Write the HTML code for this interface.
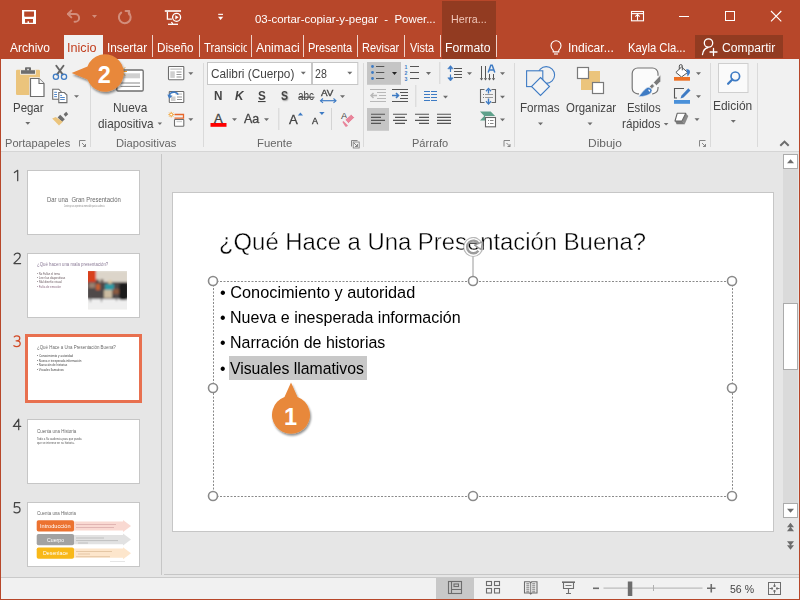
<!DOCTYPE html>
<html><head><meta charset="utf-8"><style>
html,body{margin:0;padding:0;}
body{width:800px;height:600px;overflow:hidden;position:relative;background:#e6e6e6;font-family:"Liberation Sans",sans-serif;}
.a{position:absolute;}
.t{position:absolute;white-space:pre;transform-origin:0 0;font-family:"Liberation Sans",sans-serif;}
svg{position:absolute;overflow:visible;}
</style></head><body>
<!-- red top -->
<div class="a" style="left:0;top:0;width:800px;height:59px;background:#b7472a"></div>
<div class="a" style="left:442px;top:1px;width:54px;height:58px;background:#923b21"></div>
<div class="a" style="left:695px;top:35px;width:88px;height:23px;background:#923b21"></div>
<div class="a" style="left:64px;top:35px;width:39px;height:24px;background:#f1f1f1"></div>
<!-- tab separators -->
<div class="a" style="left:152px;top:35px;width:1px;height:22px;background:#efd2ca"></div>
<div class="a" style="left:199px;top:35px;width:1px;height:22px;background:#efd2ca"></div>
<div class="a" style="left:251px;top:35px;width:1px;height:22px;background:#efd2ca"></div>
<div class="a" style="left:303px;top:35px;width:1px;height:22px;background:#efd2ca"></div>
<div class="a" style="left:357px;top:35px;width:1px;height:22px;background:#efd2ca"></div>
<div class="a" style="left:404px;top:35px;width:1px;height:22px;background:#efd2ca"></div>
<div class="a" style="left:440px;top:35px;width:1px;height:22px;background:#efd2ca"></div>
<div class="a" style="left:496px;top:35px;width:1px;height:22px;background:#efd2ca"></div>
<!-- ribbon -->
<div class="a" style="left:0;top:59px;width:800px;height:92px;background:#f1f1f1"></div>
<div class="a" style="left:0;top:151px;width:800px;height:1px;background:#d5d5d5"></div>
<!-- group separators -->
<div class="a" style="left:90px;top:63px;width:1px;height:84px;background:#dadada"></div>
<div class="a" style="left:203px;top:63px;width:1px;height:84px;background:#dadada"></div>
<div class="a" style="left:363px;top:63px;width:1px;height:84px;background:#dadada"></div>
<div class="a" style="left:514px;top:63px;width:1px;height:84px;background:#dadada"></div>
<div class="a" style="left:710px;top:63px;width:1px;height:84px;background:#dadada"></div>
<div class="a" style="left:757px;top:63px;width:1px;height:84px;background:#dadada"></div>
<!-- workspace -->
<div class="a" style="left:161px;top:154px;width:1px;height:421px;background:#c6c6c6"></div>
<div class="a" style="left:164px;top:574px;width:635px;height:1px;background:#c6c6c6"></div>
<!-- slide -->
<div class="a" style="left:172px;top:192px;width:600px;height:338px;background:#fff;border:1px solid #c6c6c6"></div>
<!-- scrollbar -->
<div class="a" style="left:783px;top:154px;width:15px;height:363px;background:#dadada"></div>
<div class="a" style="left:783px;top:154px;width:13px;height:13px;background:#fff;border:1px solid #ababab"></div>
<div class="a" style="left:783px;top:303px;width:13px;height:65px;background:#fff;border:1px solid #ababab"></div>
<div class="a" style="left:783px;top:503px;width:13px;height:13px;background:#fff;border:1px solid #ababab"></div>
<!-- status bar -->
<div class="a" style="left:0;top:577px;width:800px;height:23px;background:#f1f1f1"></div>
<div class="a" style="left:0;top:577px;width:800px;height:1px;background:#cacaca"></div>
<div class="a" style="left:436px;top:578px;width:38px;height:21px;background:#c8c8c8"></div>
<!-- thumbnails -->
<div class="a" style="left:27px;top:170px;width:111px;height:63px;background:#fff;border:1px solid #c6c6c6"></div>
<div class="a" style="left:27px;top:253px;width:111px;height:63px;background:#fff;border:1px solid #c6c6c6"></div>
<div class="a" style="left:25px;top:334px;width:111px;height:63px;background:#fff;border:3px solid #e8704f"></div>
<div class="a" style="left:27px;top:419px;width:111px;height:63px;background:#fff;border:1px solid #c6c6c6"></div>
<div class="a" style="left:27px;top:502px;width:111px;height:63px;background:#fff;border:1px solid #c6c6c6"></div>
<!-- highlight -->
<div class="a" style="left:229px;top:356px;width:138px;height:24px;background:#c8c8c8"></div>
<!-- window borders -->
<div class="a" style="left:0;top:0;width:1px;height:600px;background:#b7472a"></div>
<div class="a" style="left:799px;top:0;width:1px;height:600px;background:#b7472a"></div>
<div class="a" style="left:0;top:599px;width:800px;height:1px;background:#b7472a"></div>
<!-- thumb 2 image -->
<svg width="800" height="600" style="left:0;top:0" viewBox="0 0 800 600">
<defs><filter id="bl" x="-10%" y="-10%" width="120%" height="120%"><feGaussianBlur stdDeviation="0.9"/></filter>
<clipPath id="pc"><rect x="88" y="271" width="39" height="38.5"/></clipPath></defs>
<g clip-path="url(#pc)">
<rect x="88" y="271" width="39" height="38.5" fill="#ece9e4"/>
<g filter="url(#bl)">
<rect x="88" y="271" width="40" height="14" fill="#dcd5ca"/>
<rect x="86" y="270" width="10" height="13.5" fill="#d8401a"/>
<rect x="87" y="282" width="42" height="17" fill="#4f4a48"/>
<rect x="87" y="299" width="42" height="11" fill="#efefef"/>
<rect x="89" y="283" width="6" height="5" fill="#9a8070"/>
<rect x="96" y="284" width="4" height="6" fill="#c8602e"/>
<circle cx="97.5" cy="281" r="1.8" fill="#5a4a40"/>
<circle cx="102" cy="280.5" r="1.6" fill="#6a5a50"/>
<rect x="105" y="284" width="9" height="6" fill="#2f9aa4"/>
<circle cx="110" cy="282" r="2" fill="#e0c8a0"/>
<rect x="104" y="290" width="8" height="8" fill="#cbbba0"/>
<rect x="113" y="289" width="7" height="5" fill="#8a5a40"/>
<rect x="119" y="283" width="9" height="17" rx="3" fill="#1a1a1a"/>
<rect x="90" y="296" width="1" height="6" fill="#555"/>
<rect x="101" y="296" width="1" height="6" fill="#555"/>
<rect x="116" y="296" width="1" height="5" fill="#555"/>
</g>
</g>
</svg>
<!-- thumb 5 arrows -->
<svg width="800" height="600" style="left:0;top:0" viewBox="0 0 800 600">
<path d="M73 521.4h50v-1.4l8 6l-8 6v-1.4h-50z" fill="#f9d9d2"/>
<path d="M73 535h50v-1.4l8 6l-8 6v-1.4h-50z" fill="#e2e2e2"/>
<path d="M73 548.6h50v-1.4l8 6l-8 6v-1.4h-50z" fill="#fde6cc"/>
<rect x="36.7" y="520.2" width="37.3" height="11.4" rx="1.8" fill="#ec7230"/>
<rect x="36.7" y="533.9" width="37.3" height="11.4" rx="1.8" fill="#a2a2a2"/>
<rect x="36.7" y="547.4" width="37.3" height="11.3" rx="1.8" fill="#f8b818"/>
<g stroke-width="0.75">
<path d="M76 524.5h40M76 527.5h38" stroke="#d8a8a8"/>
<path d="M76 538h28M76 540.6h42M78 543h10" stroke="#b4b4b4"/>
<path d="M76 551.5h36M78 554h12M76 556.7h34" stroke="#dcbc98"/>
<path d="M110 561.5h15" stroke="#dcdcdc"/>
</g>
</svg>

<svg width="800" height="600" style="left:0;top:0" viewBox="0 0 800 600">
<!-- ===== title bar ===== -->
<!-- save -->
<rect x="22" y="10" width="14" height="14" fill="#fff"/>
<path d="M24.2 11.4h9.8v4.6q0 0.8-0.8 0.8h-8.2q-0.8 0-0.8-0.8z" fill="#b7472a"/>
<path d="M25 19.1h8v3.6h-4v-1.5h-1.5v1.5h-2.5z" fill="#b7472a"/>
<!-- undo (faded) -->
<g opacity="0.38" stroke="#fff" stroke-width="2" fill="none" stroke-linecap="round" stroke-linejoin="round">
<path d="M68 14h7.2a3.9 3.9 0 0 1 0 7.8h-0.6"/>
<path d="M71.3 10.6L67.9 14L71.3 17.4"/>
<path d="M128.6 12.8A5.9 5.9 0 1 1 121.2 12.6"/>
<path d="M125.6 10.9h3.6v3.7"/>
</g>
<path d="M92 15h5l-2.5 3z" fill="#fff" fill-opacity="0.38"/>
<!-- present from start -->
<g stroke="#fff" stroke-width="1.3" fill="none">
<path d="M164.8 11h16.2" stroke-width="1.6"/>
<path d="M167.4 11.7v7.4h4.5"/>
<circle cx="176.6" cy="17.3" r="4"/>
<path d="M168 24.3h10"/>
<path d="M171.5 22l1.2 2"/>
</g>
<path d="M175.3 15.2v4.2l3.3-2.1z" fill="#fff"/>
<!-- customize -->
<rect x="218.2" y="13.8" width="4.8" height="1.1" fill="#fff"/>
<path d="M218 16.8h5.2l-2.6 3.2z" fill="#fff"/>
<!-- ribbon display options -->
<g stroke="#fff" stroke-width="1.1" fill="none">
<rect x="631.5" y="11.5" width="12" height="9.3"/>
<path d="M631.5 13.6h12"/>
<path d="M637.5 20.5v-6"/>
<path d="M635.3 16.7l2.2-2.2l2.2 2.2"/>
</g>
<!-- minimize / maximize / close -->
<rect x="679" y="16" width="10" height="1" fill="#fff"/>
<rect x="725.5" y="11.5" width="9" height="9" stroke="#fff" stroke-width="1" fill="none"/>
<path d="M771 11l10.3 10.3M781.3 11L771 21.3" stroke="#fff" stroke-width="1.1"/>
<!-- ===== tab row ===== -->
<!-- bulb -->
<g stroke="#fff" stroke-width="1.1" fill="none">
<path d="M553.2 50.3c-1.2-1.3-2.2-2.7-2.2-4.6a5 5 0 0 1 10 0c0 1.9-1 3.3-2.2 4.6v1.6h-5.6z"/>
<path d="M554 54h4"/>
</g>
<!-- share person -->
<g stroke="#fff" stroke-width="1.3" fill="none" stroke-linecap="round">
<circle cx="708.5" cy="43" r="4.2"/>
<path d="M702.5 54.5c0.5-3.8 2.8-6.3 5.5-7"/>
<path d="M713.5 48.5v7M710 52h7"/>
</g>
</svg>
<svg width="800" height="600" style="left:0;top:0" viewBox="0 0 800 600">
<!-- ===== Portapapeles ===== -->
<!-- paste -->
<rect x="16" y="69.7" width="24" height="25.3" rx="1.3" fill="#ebc47c"/>
<rect x="20.2" y="69.5" width="15.6" height="5.2" fill="#f1f1f1"/>
<rect x="21" y="70.2" width="14" height="3.6" fill="#6d6d6d"/>
<rect x="25" y="67.3" width="6" height="3.5" rx="0.8" fill="#6d6d6d"/>
<rect x="27.3" y="68.8" width="1.5" height="1.4" fill="#f1f1f1"/>
<path d="M29.3 77.3h10.2l5.3 5.3v14.8h-15.5z" fill="#f1f1f1"/>
<path d="M30.5 78.5h8.5l5 5v13h-13.5z" fill="#fff" stroke="#6d6d6d" stroke-width="1.2"/>
<path d="M39 78.5v5h5" fill="#f4f4f4" stroke="#6d6d6d" stroke-width="1.1"/>
<!-- scissors -->
<path d="M56.3 65.8L62.8 74.6M63.5 65.8L57 74.6" stroke="#666" stroke-width="1.9" stroke-linecap="round"/>
<g stroke="#3e7bc4" stroke-width="1.3" fill="none">
<circle cx="55.9" cy="76.8" r="2.6"/>
<circle cx="64" cy="76.8" r="2.6"/>
</g>
<!-- copy -->
<g stroke="#6d6d6d" stroke-width="1.1" fill="#fff">
<path d="M52.7 89.2h6l2.5 2.5v7.5h-8.5z"/>
<path d="M58.8 92.5h5.5l2.6 2.6v7.5h-8.1z"/>
</g>
<g stroke="#3e7bc4" stroke-width="0.9">
<path d="M54.2 92.3h2.8M54.2 94.5h2.8M54.2 96.6h2.8"/>
<path d="M60.2 95.4h1.8M60.2 97.5h4.6M60.2 99.5h4.6"/>
</g>
<path d="M74 95.2h5l-2.5 2.6z" fill="#6d6d6d"/>
<!-- format painter -->
<path d="M63.6 114.2l2.7-2.4l1.9 2.4l-2.7 2.5z" fill="#6d6d6d"/>
<path d="M60.2 114.8l4.6 4.4l-2.7 2.7l-4.5-4.4z" fill="#6d6d6d"/>
<path d="M52.2 118.4l3.5-1.4l7.1 4.7l-3.8 3.9z" fill="#ebc47c"/>
<!-- ===== Diapositivas ===== -->
<rect x="116.8" y="70" width="26.4" height="21" rx="1.2" fill="#fff" stroke="#6d6d6d" stroke-width="1.3"/>
<rect x="120.5" y="73.3" width="19.5" height="5" fill="#d0d0d0"/>
<path d="M120.5 83h19.5M120.5 86.4h19.5" stroke="#7a7a7a" stroke-width="0.9"/>
<g stroke="#f0a030" stroke-width="1"><path d="M121 65.5v12M115 71.5h12M116.8 67.3l8.4 8.4M125.2 67.3l-8.4 8.4"/></g>
<!-- layout -->
<rect x="168.5" y="66.5" width="15.3" height="13.2" rx="0.6" fill="#fff" stroke="#6d6d6d" stroke-width="1.1"/>
<rect x="170.3" y="68.3" width="11.7" height="1.6" fill="#cfcfcf"/>
<rect x="170.3" y="71.3" width="4.5" height="6.6" fill="#cfcfcf"/>
<path d="M176.5 72h5M176.5 74.5h5M176.5 77h5" stroke="#7a7a7a" stroke-width="0.8"/>
<path d="M188.3 72.3h5l-2.5 2.7z" fill="#6d6d6d"/>
<!-- reset -->
<rect x="169.3" y="91.5" width="14.5" height="11" rx="0.6" fill="#fff" stroke="#6d6d6d" stroke-width="1.1"/>
<rect x="171" y="96.5" width="4.5" height="4.5" fill="#cfcfcf"/>
<rect x="175.5" y="93.3" width="6.5" height="1.5" fill="#cfcfcf"/>
<path d="M177 97h5M177 99.5h5" stroke="#7a7a7a" stroke-width="0.8"/>
<path d="M169 96.5c0.5-3 3-5 6-4.2c1.5 0.4 2.6 1.3 3.2 2.4" stroke="#3e7bc4" stroke-width="1.6" fill="none"/>
<path d="M167.3 94.5l2 4.3l3.3-3z" fill="#3e7bc4"/>
<!-- section -->
<g stroke="#f0a030" stroke-width="0.9">
<path d="M171.2 111.8v5.6M168.4 114.6h5.6M169.2 112.6l4 4M173.2 112.6l-4 4"/>
</g>
<circle cx="171.2" cy="114.6" r="1.4" fill="#fff" stroke="#f0a030" stroke-width="0.8"/>
<path d="M174.5 114.5h9v3.6h-9" stroke="#e8662a" stroke-width="1.3" fill="none"/>
<rect x="174.5" y="119.5" width="9.3" height="6.8" rx="0.6" fill="#fff" stroke="#6d6d6d" stroke-width="1.1"/>
<path d="M176.5 121.5h5.5" stroke="#cfcfcf" stroke-width="1.4"/>
<path d="M188.3 118.3h5l-2.5 2.7z" fill="#6d6d6d"/>
<path d="M157.6 122.5h4.5l-2.25 2.5z" fill="#6d6d6d"/>
<path d="M25.3 122h5l-2.5 2.7z" fill="#6d6d6d"/>
<!-- ===== Fuente ===== -->
<rect x="207.5" y="62.5" width="104" height="22" fill="#fff" stroke="#c6c6c6" stroke-width="1"/>
<rect x="312.5" y="62.5" width="45.3" height="22" fill="#fff" stroke="#c6c6c6" stroke-width="1"/>
<path d="M300.8 71.8h5l-2.5 2.6z" fill="#6d6d6d"/>
<path d="M347.3 71.8h5l-2.5 2.6z" fill="#6d6d6d"/>
<rect x="210.5" y="123" width="16" height="3.8" fill="#f00"/>
<path d="M232 118.3h5l-2.5 2.6z" fill="#6d6d6d"/>
<path d="M264 118.3h5l-2.5 2.6z" fill="#6d6d6d"/>
<path d="M340 95.3h5l-2.5 2.6z" fill="#6d6d6d"/>
<rect x="278.3" y="108" width="1" height="22" fill="#d4d4d4"/>
<rect x="331" y="108" width="1" height="22" fill="#d4d4d4"/>
<rect x="258" y="101" width="7.6" height="1.1" fill="#444"/>
<path d="M298.5 97.2h16" stroke="#444" stroke-width="1"/>
<path d="M320.5 100.7h15.5" stroke="#3e7bc4" stroke-width="1.2"/>
<path d="M323 98.5l-2.5 2.2l2.5 2.2M333.5 98.5l2.5 2.2l-2.5 2.2" stroke="#3e7bc4" stroke-width="1.1" fill="none"/>
<path d="M297.8 115.4h5.2l-2.6-2.9z" fill="#3e7bc4"/>
<path d="M319.2 112h5.4l-2.7 3z" fill="#3e7bc4"/>

<rect x="353.2" y="142" width="6" height="6" fill="none" stroke="#7a7a7a" stroke-width="0.8"/>
<!-- launchers -->
<g stroke="#7a7a7a" stroke-width="0.9" fill="none">
<path d="M79.5 146.5v-6h6M82 143l3.5 3.5M85.5 144v2.5H83"/>
<path d="M351.5 146.5v-6h6M354 143l3.5 3.5M357.5 144v2.5H355"/>
<path d="M504 146.5v-6h6M506.5 143l3.5 3.5M510 144v2.5H507.5"/>
<path d="M699.5 146.5v-6h6M702 143l3.5 3.5M705.5 144v2.5H703"/>
</g>
<!-- ===== Párrafo ===== -->
<rect x="367" y="62" width="34" height="22.8" fill="#c5c5c5"/>
<g fill="#3e7bc4"><circle cx="372.5" cy="66.5" r="1.4"/><circle cx="372.5" cy="72.5" r="1.4"/><circle cx="372.5" cy="78.5" r="1.4"/></g>
<path d="M376 66.5h8.3M376 72.5h8.3M376 78.5h8.3" stroke="#555" stroke-width="1"/>
<path d="M392 72h5l-2.5 3z" fill="#222"/>
<g fill="#3e7bc4" font-family="Liberation Sans" font-weight="bold" font-size="5.2">
<text x="404.6" y="68.6">1</text><text x="404.6" y="74.6">2</text><text x="404.6" y="80.6">3</text>
</g>
<path d="M410 66.5h9M410 72.5h9M410 78.5h9" stroke="#555" stroke-width="1"/>
<path d="M426 72h5l-2.5 3z" fill="#6d6d6d"/>
<rect x="439.3" y="62" width="1" height="22" fill="#d4d4d4"/>
<!-- line spacing -->
<path d="M450.5 66.5v5.5M450.5 74.5v5.5" stroke="#3e7bc4" stroke-width="1.2"/>
<path d="M447.8 68.8l2.7-3.2l2.7 3.2z M447.8 77.8l2.7 3.2l2.7-3.2z" fill="#3e7bc4" stroke="#3e7bc4" stroke-width="0.6" stroke-linejoin="round"/>
<path d="M454 68.5h8M454 71.5h8M454 74.5h8M454 77.5h8" stroke="#555" stroke-width="1"/>
<path d="M467 72.2h5l-2.5 2.8z" fill="#6d6d6d"/>
<!-- text direction -->
<path d="M481.5 66v12.5M485.5 66v12.5M489.5 74v4.5M493.5 74v4.5" stroke="#555" stroke-width="1"/>
<path d="M479.8 78.2h3.4l-1.7 2.4zM483.8 78.2h3.4l-1.7 2.4zM487.8 78.2h3.4l-1.7 2.4zM491.8 78.2h3.4l-1.7 2.4z" fill="#555"/>
<path d="M488.2 72.6l2.6-7.3h1.4l2.6 7.3M489.3 70h4.4" stroke="#3e7bc4" stroke-width="1.5" fill="none"/>
<path d="M500 72.2h5l-2.5 2.8z" fill="#6d6d6d"/>
<!-- indent -->
<path d="M370 89.5h16M377 92.5h9M379 95.5h7M377 98.5h9M370 101.5h16" stroke="#b8b8b8" stroke-width="1"/>
<path d="M377 95.5h-6M373.5 93l-2.5 2.5l2.5 2.5" stroke="#b8b8b8" stroke-width="1.5" fill="none"/>
<path d="M392 89.5h16M400 92.5h8M401 95.5h7M400 98.5h8M392 101.5h16" stroke="#555" stroke-width="1"/>
<path d="M392 95.5h6M396 93l2.5 2.5l-2.5 2.5" stroke="#3e7bc4" stroke-width="1.6" fill="none"/>
<rect x="415.3" y="85" width="1" height="22" fill="#d4d4d4"/>
<path d="M424 91.5h6M431 91.5h6M424 94.5h6M431 94.5h6M424 97.5h6M431 97.5h6M424 100.5h6M431 100.5h6" stroke="#3e7bc4" stroke-width="1.1"/>
<path d="M443 95.8h5l-2.5 2.8z" fill="#6d6d6d"/>
<!-- align text -->
<path d="M484.5 89.5h-4v13h4M491.5 89.5h4v13h-4" stroke="#666" stroke-width="1.1" fill="none"/>
<path d="M485 94.5h8M485 97.5h8" stroke="#999" stroke-width="1"/>
<path d="M483 94.5h1M483 97.5h1" stroke="#777" stroke-width="1"/>
<path d="M488.5 89.5v4M488.5 98.5v4.5" stroke="#3e7bc4" stroke-width="1.4"/>
<path d="M486 91.2l2.5-2.8l2.5 2.8M486 101.3l2.5 2.8l2.5-2.8" stroke="#3e7bc4" stroke-width="1.3" fill="none"/>
<path d="M500 95.8h5l-2.5 2.8z" fill="#6d6d6d"/>
<!-- align buttons -->
<rect x="367" y="108" width="22" height="22.8" fill="#c5c5c5"/>
<path d="M371 114.3h14M371 117.4h10M371 120.4h14M371 123.4h10" stroke="#555" stroke-width="1.1"/>
<path d="M393 114.3h14M395 117.4h10M393 120.4h14M395 123.4h10" stroke="#555" stroke-width="1.1"/>
<path d="M415 114.3h14M419 117.4h10M415 120.4h14M419 123.4h10" stroke="#555" stroke-width="1.1"/>
<path d="M437 114.3h14M437 117.4h14M437 120.4h14M437 123.4h14" stroke="#555" stroke-width="1.1"/>
<!-- smartart -->
<path d="M480 111.4h10.7l4.4 4.6h-10v4.6h-5.1l4.2-4.6z" fill="#5fa18b"/>
<rect x="485.5" y="117.5" width="10" height="9.3" fill="#fff" stroke="#666" stroke-width="1.1"/>
<path d="M488 120.5h1M490 120.5h3.5M488 123.5h1M490 123.5h3.5" stroke="#888" stroke-width="1"/>
<path d="M500 118.5h5l-2.5 2.8z" fill="#6d6d6d"/>
<!-- ===== Dibujo ===== -->
<circle cx="546.2" cy="75" r="8.4" stroke="#3e7bc4" stroke-width="1.1" fill="#f1f1f1"/>
<rect x="526.6" y="70.8" width="16.2" height="15.8" stroke="#3e7bc4" stroke-width="1.1" fill="#f1f1f1"/>
<path d="M540.5 77.5l9 9l-9 9l-9-9z" stroke="#3e7bc4" stroke-width="1.1" fill="#f4f4f4"/>
<path d="M538 92.5h5l-2.5 2.8z" fill="#6d6d6d" transform="translate(0,30)"/>
<rect x="581" y="71" width="19" height="19" fill="#ebc47c"/>
<rect x="577.5" y="67.5" width="11" height="11" fill="#fff" stroke="#7a7a7a" stroke-width="1.2"/>
<rect x="592.5" y="82.5" width="11" height="11" fill="#fff" stroke="#7a7a7a" stroke-width="1.2"/>
<path d="M587.5 122.5h5l-2.5 2.8z" fill="#6d6d6d"/>
<!-- quick styles -->
<path d="M632.2 73.5a5.5 5.5 0 0 1 5.5-5.5h14.8a5.5 5.5 0 0 1 5.5 5.5v14.8a5.5 5.5 0 0 1-5.5 5.5h-14.8a5.5 5.5 0 0 1-5.5-5.5z" fill="#fbfbfb"/>
<path d="M639 93.8h-1.3a5.5 5.5 0 0 1-5.5-5.5v-14.8a5.5 5.5 0 0 1 5.5-5.5h14.8a5.5 5.5 0 0 1 5.5 5.5v2.2" stroke="#777" stroke-width="1.2" fill="none"/>
<path d="M658 87v1.3a5.5 5.5 0 0 1-5.5 5.5h-0.3" stroke="#777" stroke-width="1.2" fill="none"/>
<path d="M660.7 74.8v6.6l-4.2 4l-2.9-2.9z" fill="#7a7a7a" stroke="#f1f1f1" stroke-width="0.6"/>
<path d="M652.2 83.8l2.3 2.3l-2.6 2.6l-2.3-2.3z" fill="#7a7a7a" stroke="#f1f1f1" stroke-width="0.6"/>
<path d="M638.6 96.8c2.5-3.2 5-6.5 7.2-8.2a3.4 3.4 0 0 1 5.3 4.3c-2.5 2.5-7 3.6-12.5 3.9z" fill="#3e7bc4" stroke="#f1f1f1" stroke-width="0.6"/>
<path d="M648 89.8a1.4 1.4 0 0 1 2.2 1.5l-0.8 0.4z" fill="#fff"/>
<path d="M663.8 123h4.6l-2.3 2.6z" fill="#6d6d6d"/>
<!-- fill -->
<path d="M681.5 67l6.2 5.4l-6.2 4.6l-5.6-4.6z" fill="#fff" stroke="#555" stroke-width="1" stroke-dasharray="none"/>
<path d="M679.3 69.3v-3.2a1.5 1.5 0 0 1 3 0v4.2" stroke="#555" stroke-width="1" fill="none"/>
<path d="M686.2 69.3c2.2-0.5 3.8 0.6 3.8 2.6c0 1.6-1.2 3-2.5 4.6l-0.5-3.8z" fill="#3e7bc4"/>
<rect x="674" y="77" width="16" height="3.7" fill="#ed7125"/>
<path d="M696 72.2h5l-2.5 2.8z" fill="#6d6d6d"/>
<!-- outline -->
<path d="M684 88.5h-9.5v9.5h2.5" stroke="#555" stroke-width="1.1" fill="none"/>
<path d="M688.3 88.2l2.2 2.2l-7 7l-3 1l1-3z" fill="#3e7bc4"/>
<rect x="674" y="100" width="16" height="3.8" fill="#4a90d9"/>
<path d="M696 95.2h5l-2.5 2.8z" fill="#6d6d6d"/>
<!-- effects -->
<path d="M685.8 113.3l2.5 2.7l-3.6 8.2l-2.8-3.2z" fill="#8a8a8a"/>
<path d="M675 121l7 0l2.8 3.2h-8.2z" fill="#7a7a7a"/>
<path d="M677.2 113.3h8.6l-3.8 7.7h-7z" fill="#fff" stroke="#666" stroke-width="1.1" stroke-linejoin="round"/>
<path d="M694.5 118.3h5l-2.5 2.8z" fill="#6d6d6d"/>
<!-- edicion -->
<rect x="718.5" y="63.5" width="29.5" height="29" fill="#fafafa" stroke="#cfcfcf" stroke-width="1"/>
<circle cx="735.3" cy="76.3" r="4.3" stroke="#3e7bc4" stroke-width="1.7" fill="none"/>
<path d="M732.3 79.5l-4.2 4.2" stroke="#3e7bc4" stroke-width="2.3" stroke-linecap="round"/>
<path d="M730.8 120h5l-2.5 2.8z" fill="#6d6d6d"/>
<path d="M780.3 145.8l4.2-4.2l4.2 4.2" stroke="#6d6d6d" stroke-width="2" fill="none"/>
</svg>
<svg width="800" height="600" style="left:0;top:0" viewBox="0 0 800 600">
<!-- thumb numbers -->
<g fill="none" stroke="#444" stroke-width="1.25" stroke-linecap="round" stroke-linejoin="round">
<path d="M14.4 172.6L17.7 170.3V180.7"/>
<path d="M14.3 254.9C15 253.6 16.2 253.1 17.4 253.1C19.2 253.1 20.2 254.2 20.2 255.8C20.2 257.3 19.4 258.3 17.6 259.9L14 263.2V263.5H20.6"/>
<path d="M13.5 426.3L18.7 419.2V429.7M13.3 426.4H20.7"/>
<path d="M19.8 502.6H14.6L14.3 507.1C15 506.8 15.8 506.6 16.6 506.6C18.7 506.6 20 507.9 20 509.7C20 511.6 18.6 512.8 16.6 512.8C15.5 512.8 14.6 512.5 14 512"/>
</g>
<path d="M14.2 336.9C14.8 336.2 15.8 335.9 16.9 335.9C18.8 335.9 19.8 336.8 19.8 338.3C19.8 339.8 18.6 340.8 16.8 340.8H16.1M16.8 340.8C18.9 340.8 20.2 341.8 20.2 343.6C20.2 345.4 18.8 346.6 16.7 346.6C15.6 346.6 14.6 346.3 13.9 345.7" fill="none" stroke="#d24a26" stroke-width="1.25" stroke-linecap="round"/>
<!-- scrollbar arrows -->
<path d="M787 163.2h7l-3.5-4z" fill="#6d6d6d"/>
<path d="M787 508.8h7l-3.5 4z" fill="#6d6d6d"/>
<path d="M787 527.3h7l-3.5-4.5zM787 531.2h7l-3.5-4.5z" fill="#6d6d6d"/>
<path d="M787 541.2h7l-3.5 4.5zM787 545.2h7l-3.5 4.5z" fill="#6d6d6d"/>
<!-- status bar icons -->
<g stroke="#6d6d6d" stroke-width="1.1" fill="none">
<rect x="448.5" y="581.5" width="13" height="12"/>
<path d="M451.5 581.5v12M451.5 589.5h10"/>
<rect x="454" y="584" width="4.5" height="2.5"/>
<rect x="486.5" y="581.5" width="5" height="4"/><rect x="494.5" y="581.5" width="5" height="4"/>
<rect x="486.5" y="588.5" width="5" height="4.5"/><rect x="494.5" y="588.5" width="5" height="4.5"/>
<path d="M524.5 581.8h5.2l1 0.9l1-0.9h5.3v11.2h-5.3l-1 1l-1-1h-5.2z"/>
<path d="M530.7 582.5v11.5" stroke-width="0.9"/>
<path d="M526.3 583.8h3M526.3 585.8h3M526.3 587.8h3M526.3 589.8h3M526.3 591.8h3M532.2 583.8h3M532.2 585.8h3M532.2 587.8h3M532.2 589.8h3M532.2 591.8h3" stroke-width="0.9"/>
<path d="M562 582.2h13" stroke-width="1.6"/>
<path d="M563.5 583v5.5h10v-5.5M568.5 588.5v4.8M566 593.5h5"/>
<path d="M565.5 585.5h6" stroke-width="0.9"/>
</g>
<rect x="593" y="587.5" width="6" height="1.6" fill="#6d6d6d"/>
<rect x="603.5" y="587.6" width="99" height="1" fill="#b0b0b0"/>
<rect x="653" y="585" width="1" height="6" fill="#b0b0b0"/>
<rect x="627.8" y="581.5" width="4.5" height="14.5" fill="#6d6d6d"/>
<path d="M707 588.2h8.5M711.25 584v8.5" stroke="#6d6d6d" stroke-width="1.6"/>
<g stroke="#6d6d6d" stroke-width="1" fill="none">
<rect x="768.5" y="582.5" width="12" height="12"/>
<path d="M774.5 583.5v3.5M774.5 590v3.5M769.5 588.5h3.5M776 588.5h3.5" stroke-width="1"/>
<path d="M773 586h3M773 591h3M772 587v3M777 587v3" stroke-width="0.9"/>
</g>
<!-- selection box -->
<g stroke="#8a8a8a" stroke-width="1" fill="none" stroke-dasharray="2 1.5">
<path d="M213 281.5H732.5M213 496.5H732.5M213.5 281V496.5M732.5 281V496.5"/>
</g>
<path d="M473 252v24" stroke="#9a9a9a" stroke-width="1"/>
<g stroke="#8a8a8a" stroke-width="1.6" fill="#fff">
<circle cx="213" cy="281" r="4.5"/><circle cx="473" cy="281" r="4.5"/><circle cx="732" cy="281" r="4.5"/>
<circle cx="213" cy="388" r="4.5"/><circle cx="732" cy="388" r="4.5"/>
<circle cx="213" cy="496" r="4.5"/><circle cx="473" cy="496" r="4.5"/><circle cx="732" cy="496" r="4.5"/>
</g>
</svg>

<div class="t" style="left:254.50px;top:13.00px;font-size:11.6px;line-height:11.6px;color:#ffffff;font-weight:400;transform:scaleX(0.9841);">03-cortar-copiar-y-pegar  -  Power...</div>
<div class="t" style="left:450.80px;top:12.80px;font-size:11.6px;line-height:11.6px;color:#f2c8ba;font-weight:400;transform:scaleX(0.9211);">Herra...</div>
<div class="t" style="left:10.00px;top:41.80px;font-size:12.5px;line-height:12.5px;color:#ffffff;font-weight:400;transform:scaleX(0.9586);">Archivo</div>
<div class="t" style="left:67.49px;top:41.80px;font-size:12.5px;line-height:12.5px;color:#c23e1e;font-weight:400;transform:scaleX(1.0096);">Inicio</div>
<div class="t" style="left:107.05px;top:41.80px;font-size:12.5px;line-height:12.5px;color:#ffffff;font-weight:400;transform:scaleX(0.9463);">Insertar</div>
<div class="t" style="left:157.06px;top:41.80px;font-size:12.5px;line-height:12.5px;color:#ffffff;font-weight:400;transform:scaleX(0.9379);">Diseño</div>
<div class="t" style="left:256.00px;top:41.80px;font-size:12.5px;line-height:12.5px;color:#ffffff;font-weight:400;transform:scaleX(0.9844);">Animaci</div>
<div class="t" style="left:307.72px;top:41.80px;font-size:12.5px;line-height:12.5px;color:#ffffff;font-weight:400;transform:scaleX(0.8843);">Presenta</div>
<div class="t" style="left:361.52px;top:41.80px;font-size:12.5px;line-height:12.5px;color:#ffffff;font-weight:400;transform:scaleX(0.8785);">Revisar</div>
<div class="t" style="left:410.00px;top:41.80px;font-size:12.5px;line-height:12.5px;color:#ffffff;font-weight:400;transform:scaleX(0.8692);">Vista</div>
<div class="t" style="left:445.02px;top:41.80px;font-size:12.5px;line-height:12.5px;color:#ffffff;font-weight:400;transform:scaleX(0.9783);">Formato</div>
<div class="t" style="left:567.63px;top:41.80px;font-size:12.5px;line-height:12.5px;color:#ffffff;font-weight:400;transform:scaleX(0.9700);">Indicar...</div>
<div class="t" style="left:627.50px;top:41.80px;font-size:12.5px;line-height:12.5px;color:#ffffff;font-weight:400;transform:scaleX(0.9000);">Kayla Cla...</div>
<div class="t" style="left:721.90px;top:41.80px;font-size:12.5px;line-height:12.5px;color:#ffffff;font-weight:400;transform:scaleX(0.9706);">Compartir</div>
<div class="t" style="left:12.58px;top:101.50px;font-size:12.4px;line-height:12.4px;color:#444444;font-weight:400;transform:scaleX(0.9237);">Pegar</div>
<div class="t" style="left:112.54px;top:101.50px;font-size:12.4px;line-height:12.4px;color:#444444;font-weight:400;transform:scaleX(0.9592);">Nueva</div>
<div class="t" style="left:97.80px;top:117.50px;font-size:12.4px;line-height:12.4px;color:#444444;font-weight:400;transform:scaleX(0.9496);">diapositiva</div>
<div class="t" style="left:210.70px;top:67.50px;font-size:12.4px;line-height:12.4px;color:#444444;font-weight:400;transform:scaleX(0.9528);">Calibri (Cuerpo)</div>
<div class="t" style="left:315.00px;top:67.50px;font-size:12.4px;line-height:12.4px;color:#444444;font-weight:400;transform:scaleX(0.8567);">28</div>
<div class="t" style="left:520.36px;top:101.50px;font-size:12.4px;line-height:12.4px;color:#444444;font-weight:400;transform:scaleX(0.9412);">Formas</div>
<div class="t" style="left:565.80px;top:101.50px;font-size:12.4px;line-height:12.4px;color:#444444;font-weight:400;transform:scaleX(0.9212);">Organizar</div>
<div class="t" style="left:627.38px;top:101.50px;font-size:12.4px;line-height:12.4px;color:#444444;font-weight:400;transform:scaleX(0.9207);">Estilos</div>
<div class="t" style="left:621.70px;top:117.50px;font-size:12.4px;line-height:12.4px;color:#444444;font-weight:400;transform:scaleX(0.9470);">rápidos</div>
<div class="t" style="left:713.24px;top:99.50px;font-size:12.4px;line-height:12.4px;color:#444444;font-weight:400;transform:scaleX(0.9636);">Edición</div>
<div class="t" style="left:4.60px;top:137.90px;font-size:11px;line-height:11px;color:#666666;font-weight:400;transform:scaleX(1.0073);">Portapapeles</div>
<div class="t" style="left:115.50px;top:137.90px;font-size:11px;line-height:11px;color:#666666;font-weight:400;transform:scaleX(1.0167);">Diapositivas</div>
<div class="t" style="left:256.70px;top:137.90px;font-size:11px;line-height:11px;color:#666666;font-weight:400;transform:scaleX(1.0285);">Fuente</div>
<div class="t" style="left:412.40px;top:137.90px;font-size:11px;line-height:11px;color:#666666;font-weight:400;transform:scaleX(1.0013);">Párrafo</div>
<div class="t" style="left:587.50px;top:137.90px;font-size:11px;line-height:11px;color:#666666;font-weight:400;transform:scaleX(1.0880);">Dibujo</div>
<div class="t" style="left:218.51px;top:230.00px;font-size:24.2px;line-height:24.2px;color:#000000;font-weight:400;transform:scaleX(0.9861);-webkit-text-stroke:0.4px #fff;">¿Qué Hace a Una Presentación Buena?</div>
<div class="t" style="left:219.80px;top:284.10px;font-size:16.3px;line-height:16.3px;color:#000000;font-weight:400;transform:scaleX(1.0021);">• Conocimiento y autoridad</div>
<div class="t" style="left:219.80px;top:308.90px;font-size:16.3px;line-height:16.3px;color:#000000;font-weight:400;transform:scaleX(0.9837);">• Nueva e inesperada información</div>
<div class="t" style="left:219.80px;top:334.30px;font-size:16.3px;line-height:16.3px;color:#000000;font-weight:400;transform:scaleX(0.9807);">• Narración de historias</div>
<div class="t" style="left:219.80px;top:359.50px;font-size:16.3px;line-height:16.3px;color:#000000;font-weight:400;transform:scaleX(0.9701);">• Visuales llamativos</div>
<div class="t" style="left:213.80px;top:89.80px;font-size:12.5px;line-height:12.5px;color:#444444;font-weight:700;transform:scaleX(0.9333);">N</div>
<div class="t" style="left:235.00px;top:89.80px;font-size:12.5px;line-height:12.5px;color:#444444;font-weight:700;transform:scaleX(0.9444);font-style:italic;">K</div>
<div class="t" style="left:258.00px;top:89.80px;font-size:12.5px;line-height:12.5px;color:#444444;font-weight:700;transform:scaleX(0.9375);">S</div>
<div class="t" style="left:280.80px;top:90.00px;font-size:12.5px;line-height:12.5px;color:#444444;font-weight:700;transform:scaleX(0.8375);text-shadow:1px 1px 1.5px #999;">S</div>
<div class="t" style="left:298.20px;top:89.90px;font-size:12px;line-height:12px;color:#444444;font-weight:400;transform:scaleX(0.8218);">abc</div>
<div class="t" style="left:320.70px;top:89.20px;font-size:9.2px;line-height:9.2px;color:#444444;font-weight:400;transform:scaleX(1.0687);-webkit-text-stroke:0.35px #444;">AV</div>
<div class="t" style="left:214.00px;top:111.50px;font-size:13px;line-height:13px;color:#444444;font-weight:400;transform:scaleX(1.0000);-webkit-text-stroke:0.3px #444;">A</div>
<div class="t" style="left:244.20px;top:112.50px;font-size:12.5px;line-height:12.5px;color:#444444;font-weight:400;transform:scaleX(0.9976);-webkit-text-stroke:0.3px #444;">Aa</div>
<div class="t" style="left:289.30px;top:113.30px;font-size:13px;line-height:13px;color:#444444;font-weight:400;transform:scaleX(1.0111);-webkit-text-stroke:0.3px #444;">A</div>
<div class="t" style="left:312.20px;top:117.30px;font-size:9.2px;line-height:9.2px;color:#444444;font-weight:400;transform:scaleX(0.9857);-webkit-text-stroke:0.35px #444;">A</div>
<div class="t" style="left:341.00px;top:111.00px;font-size:9.5px;line-height:9.5px;color:#444444;font-weight:400;transform:scaleX(1.0000);">A</div>
<div class="a" style="left:0;top:0;width:247px;height:60px;overflow:hidden"><div class="t" style="left:204.30px;top:41.80px;font-size:12.5px;line-height:12.5px;color:#ffffff;font-weight:400;transform:scaleX(0.8985);">Transiciones</div></div>
<div class="t" style="left:47.00px;top:196.00px;font-size:7px;line-height:7px;color:#6a6a6a;font-weight:400;transform:scaleX(0.8480);">Dar una  Gran Presentación</div>
<div class="t" style="left:64.30px;top:204.60px;font-size:3px;line-height:3px;color:#888;font-weight:400;transform:scaleX(0.5376);">Construye una experiencia memorable para tu audiencia</div>
<div class="t" style="left:37.00px;top:261.80px;font-size:5.5px;line-height:5.5px;color:#8a7a96;font-weight:400;transform:scaleX(0.7872);">¿Qué hacen una mala presentación?</div>
<div class="t" style="left:37.00px;top:272.80px;font-size:3.6px;line-height:3.6px;color:#6a5a60;font-weight:400;transform:scaleX(0.7560);">• No Fallan el tema</div>
<div class="t" style="left:37.00px;top:276.80px;font-size:3.6px;line-height:3.6px;color:#6a5a60;font-weight:400;transform:scaleX(0.8138);">• Leer las diapositivas</div>
<div class="t" style="left:37.00px;top:280.80px;font-size:3.6px;line-height:3.6px;color:#6a5a60;font-weight:400;transform:scaleX(0.8327);">• Mal diseño visual</div>
<div class="t" style="left:37.00px;top:286.00px;font-size:3.6px;line-height:3.6px;color:#8a6a80;font-weight:400;transform:scaleX(0.8047);">• Falta de emoción</div>
<div class="t" style="left:37.00px;top:345.00px;font-size:5.5px;line-height:5.5px;color:#6a6a6a;font-weight:400;transform:scaleX(0.8004);">¿Qué Hace a Una Presentación Buena?</div>
<div class="t" style="left:37.00px;top:355.00px;font-size:3.6px;line-height:3.6px;color:#444;font-weight:400;transform:scaleX(0.8370);">• Conocimiento y autoridad</div>
<div class="t" style="left:37.00px;top:359.80px;font-size:3.6px;line-height:3.6px;color:#444;font-weight:400;transform:scaleX(0.8241);">• Nueva e inesperada información</div>
<div class="t" style="left:37.00px;top:363.80px;font-size:3.6px;line-height:3.6px;color:#444;font-weight:400;transform:scaleX(0.8152);">• Narración de historias</div>
<div class="t" style="left:37.00px;top:368.80px;font-size:3.6px;line-height:3.6px;color:#444;font-weight:400;transform:scaleX(0.8193);">• Visuales llamativos</div>
<div class="t" style="left:37.00px;top:428.50px;font-size:5.5px;line-height:5.5px;color:#6a6a6a;font-weight:400;transform:scaleX(0.8072);">Cuenta una Historia</div>
<div class="t" style="left:37.00px;top:438.30px;font-size:3.6px;line-height:3.6px;color:#555;font-weight:400;transform:scaleX(0.7575);">Todo a Su audiencia para que pueda</div>
<div class="t" style="left:37.00px;top:442.30px;font-size:3.6px;line-height:3.6px;color:#555;font-weight:400;transform:scaleX(0.7821);">que se interese en su historia.</div>
<div class="t" style="left:37.30px;top:511.30px;font-size:5.5px;line-height:5.5px;color:#6a6a6a;font-weight:400;transform:scaleX(0.7992);">Cuenta una Historia</div>
<div class="t" style="left:40.00px;top:523.00px;font-size:6.2px;line-height:6.2px;color:#fff;font-weight:400;transform:scaleX(0.9047);">Introducción</div>
<div class="t" style="left:47.00px;top:536.50px;font-size:6.2px;line-height:6.2px;color:#fff;font-weight:400;transform:scaleX(0.8392);">Cuerpo</div>
<div class="t" style="left:43.00px;top:550.00px;font-size:6.2px;line-height:6.2px;color:#fff;font-weight:400;transform:scaleX(0.8558);">Desenlace</div>
<div class="t" style="left:730.00px;top:584.00px;font-size:11.5px;line-height:11.5px;color:#444444;font-weight:400;transform:scaleX(0.9159);">56 %</div>
<!-- clip Transicion -->

<svg width="800" height="600" style="left:0;top:0" viewBox="0 0 800 600">
<defs>
<filter id="sh" x="-30%" y="-30%" width="160%" height="160%">
<feGaussianBlur in="SourceAlpha" stdDeviation="1.3"/>
<feOffset dx="1" dy="1.5" result="b"/>
<feComponentTransfer><feFuncA type="linear" slope="0.45"/></feComponentTransfer>
<feMerge><feMergeNode/><feMergeNode in="SourceGraphic"/></feMerge>
</filter>
</defs>
<path d="M345 119.8l6.2-5.6l3.4 3.4l-6.2 6z" fill="#e8849a" stroke="#f1f1f1" stroke-width="0.8"/>
<path d="M342.4 122l1-1l4.6 4.6l-1 0.8c-0.6 0.5-1.2 0.5-1.7 0z" fill="#e8849a"/>
<!-- rotation handle -->
<circle cx="473.2" cy="247" r="7.8" fill="none" stroke="#fff" stroke-width="3.4"/>
<circle cx="473.2" cy="247" r="9.5" fill="none" stroke="#b8b8b8" stroke-width="1.1"/>
<path d="M478.4 250.8A6.3 6.3 0 1 1 478.6 243.4" fill="none" stroke="#9c9c9c" stroke-width="2.4"/>
<path d="M474.6 245.2l6.6 4.5l1.2-7.8z" fill="#fff" stroke="#9c9c9c" stroke-width="1.4" stroke-linejoin="round"/>
<g filter="url(#sh)">
<path d="M71.6 73L87.5 66.5A18.7 18.7 0 1 1 87.5 79.5z" fill="#e8883a"/>
<path d="M291 382.6L297.5 397A19 19 0 1 1 284.5 397z" fill="#e8883a"/>
</g>
<text x="104.2" y="83" fill="#fff" font-family="Liberation Sans" font-weight="bold" font-size="23.5" text-anchor="middle">2</text>
<text x="290.5" y="425" fill="#fff" font-family="Liberation Sans" font-weight="bold" font-size="23.5" text-anchor="middle">1</text>
</svg>

</body></html>
